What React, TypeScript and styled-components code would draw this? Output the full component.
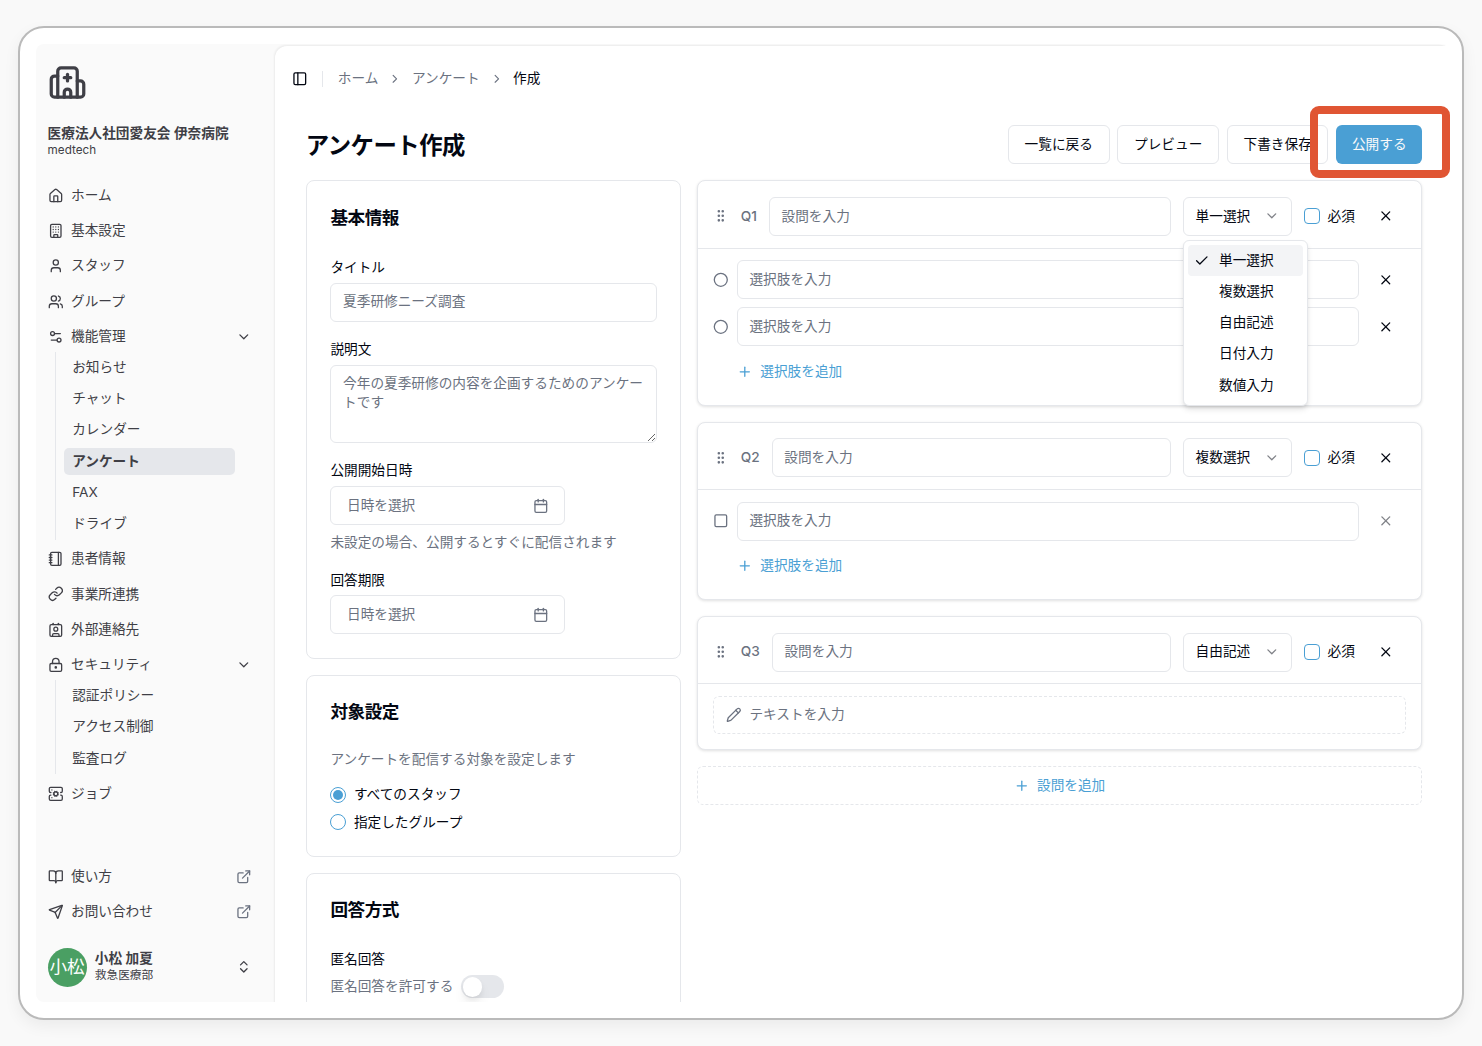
import React from 'react';
import styled, { createGlobalStyle, css } from 'styled-components';
import {
  BookOpen, Building, Calendar, Check, ChevronDown, ChevronRight, ChevronsUpDown, Circle, Contact,
  ExternalLink, GripVertical, Hospital, House, Link, LockKeyhole, Notebook, PanelLeft, Pencil, Plus,
  Send, ServerCog, Settings2, Square, User, Users, X,
} from 'lucide-react';

const c = {
  ink: '#030712',
  muted: '#6b7280',
  line: '#e5e7eb',
  side: '#3f3f46',
  accent: '#4a9fd4',
};
const ICON = 15.6;

const Global = createGlobalStyle`
  *, *::before, *::after { box-sizing: border-box; }
  body {
    margin: 0;
    background: #f9f9f9;
    color: ${c.ink};
    font-family: Inter, "Noto Sans CJK JP", sans-serif;
    font-size: 13.67px;
    line-height: 19.5px;
    -webkit-font-smoothing: antialiased;
  }
  h1, h2, p { margin: 0; }
  svg { display: block; flex: none; }
`;

const Page = styled.div`
  height: 1046px;
  padding: 26px 18px;
  overflow: hidden;
`;
const Frame = styled.div`
  width: 1446px;
  height: 994px;
  padding: 16px;
  border: 2px solid #bababa;
  border-radius: 26px;
  background: #fff;
  box-shadow: 0 6px 16px rgba(0, 0, 0, 0.06);
`;
const Shell = styled.div`
  display: flex;
  height: 958px;
  overflow-x: visible;
  overflow-y: clip;
  border-radius: 8px;
  background: #fafafa;
`;

/* ---------- sidebar ---------- */
const Sidebar = styled.aside`
  display: flex;
  flex-direction: column;
  flex: none;
  width: 239px;
  padding: 18.5px 24px 13px 11.6px;
  color: ${c.side};
`;
const OrgName = styled.div`
  margin: 22.5px 0 1px;
  font-weight: 600;
  line-height: 18px;
  white-space: nowrap;
`;
const OrgSub = styled.div`
  font-size: 11.7px;
  line-height: 15.6px;
`;
const Menu = styled.nav<{ $top: number }>`
  display: flex;
  flex-direction: column;
  gap: 3.9px;
  margin-top: ${p => p.$top}px;
`;
const MenuItem = styled.div`
  display: flex;
  align-items: center;
  gap: 7.8px;
  height: 31.25px;
`;
const Grow = styled.span`
  flex: 1;
  white-space: nowrap;
`;
const SubMenu = styled.div`
  display: flex;
  flex-direction: column;
  gap: 3.9px;
  margin-left: 7px;
  padding: 2px 0 2px 8.6px;
  border-left: 1px solid ${c.line};
`;
const SubItem = styled.div<{ $active?: boolean }>`
  display: flex;
  align-items: center;
  width: 171px;
  height: 27.35px;
  padding: 0 8px;
  border-radius: 5px;
  ${p => p.$active && css`background: ${c.line}; font-weight: 600;`}
`;
const ToneIcon = styled.span<{ $muted?: boolean }>`
  margin-right: -0.5px;
  color: ${p => (p.$muted ? c.muted : c.side)};
`;
const UserRow = styled.div`
  display: flex;
  align-items: center;
  margin-top: 19.7px;
  height: 39px;
`;
const Avatar = styled.div`
  display: grid;
  place-items: center;
  width: 39px;
  height: 39px;
  margin-right: 8.2px;
  border-radius: 50%;
  background: #4a9f63;
  color: #fff;
  font-size: 17.6px;
`;
const UserName = styled.div`
  font-weight: 600;
  line-height: 17.6px;
`;

/* ---------- main panel ---------- */
const Main = styled.main`
  flex: 1;
  height: 960px;
  margin-top: 2.4px;
  padding: 16.4px 24px 0 17px;
  border-radius: 12px 0 0 0;
  background: #fff;
  box-shadow: -1px -1px 2px rgba(0, 0, 0, 0.06);
`;
const Crumbs = styled.div`
  display: flex;
  align-items: center;
  gap: 9.9px;
  height: 32px;
  color: ${c.muted};
  white-space: nowrap;
`;
const Toggle = styled.span`
  margin-right: 4.4px;
  color: ${c.ink};
`;
const Divider = styled.span`
  width: 1px;
  height: 15.6px;
  margin-right: 5.1px;
  background: ${c.line};
`;
const Current = styled.span`
  color: ${c.ink};
`;
const TitleRow = styled.div`
  display: flex;
  align-items: center;
  justify-content: space-between;
  height: 39px;
  margin: 30.4px 0 16.2px 13.7px;
`;
const Title = styled.h1`
  padding-top: 2px;
  font-size: 23.4px;
  font-weight: 700;
  line-height: 32px;
  letter-spacing: -0.022em;
`;
const Actions = styled.div`
  display: flex;
  gap: 7.8px;
`;
const Button = styled.button<{ $primary?: boolean }>`
  height: 39px;
  padding: 0 15.7px;
  border: 1px solid ${c.line};
  border-radius: 6px;
  background: #fff;
  color: ${c.ink};
  font: inherit;
  white-space: nowrap;
  ${p => p.$primary && css`border: 0; background: ${c.accent}; color: #fafafa;`}
`;
const PublishSpot = styled.div`
  position: relative;
`;
const Highlight = styled.div`
  position: absolute;
  top: -19px;
  left: -26.5px;
  width: 140px;
  height: 72px;
  border: 8px solid #e05533;
  border-radius: 9px;
  pointer-events: none;
`;
const Columns = styled.div`
  display: grid;
  grid-template-columns: 375px 725.7px;
  gap: 15.6px;
  align-items: start;
  margin-left: 14px;
`;
const Stack = styled.div`
  display: flex;
  flex-direction: column;
  gap: 16.1px;
`;

/* ---------- settings cards ---------- */
const Card = styled.section`
  padding: 23.4px;
  border: 1px solid ${c.line};
  border-radius: 8px;
  background: #fff;
`;
const CardTitle = styled.h2<{ $gap: number }>`
  margin-bottom: ${p => p.$gap}px;
  font-size: 17.58px;
  font-weight: 600;
  line-height: 26px;
  letter-spacing: -0.025em;
`;
const Fields = styled.div`
  display: grid;
  gap: 21.5px;
`;
const Field = styled.div`
  display: grid;
  gap: 7.9px;
`;
const Label = styled.div`
  line-height: 13.7px;
`;
const Input = styled.div`
  display: flex;
  flex: 1;
  align-items: center;
  height: 39px;
  padding: 0 11.7px;
  border: 1px solid ${c.line};
  border-radius: 6px;
  background: #fff;
  color: ${c.muted};
  white-space: nowrap;
`;
const Area = styled.div`
  position: relative;
  height: 78px;
  padding: 7.8px 10px 7.8px 11.7px;
  border: 1px solid ${c.line};
  border-radius: 6px;
  color: ${c.muted};
`;
const Grip = styled.svg`
  position: absolute;
  right: 0;
  bottom: 0;
`;
const DateInput = styled(Input)`
  justify-content: space-between;
  width: 234.5px;
  padding: 0 15.8px 0 15.6px;
`;
const Note = styled.p`
  color: ${c.muted};
  white-space: nowrap;
`;
const Radios = styled.div`
  display: grid;
  gap: 7.8px;
  margin-top: 16px;
`;
const RadioRow = styled.div`
  display: flex;
  align-items: center;
  gap: 7.5px;
`;
const Radio = styled.span<{ $on?: boolean }>`
  display: grid;
  place-items: center;
  width: 16px;
  height: 16px;
  border: 1px solid ${c.accent};
  border-radius: 50%;
  &::after {
    content: '';
    width: 10px;
    height: 10px;
    border-radius: 50%;
    background: ${p => (p.$on ? c.accent : 'transparent')};
  }
`;
const Switch = styled.span`
  width: 43px;
  height: 23.4px;
  padding: 2px;
  border-radius: 12px;
  background: ${c.line};
  &::after {
    content: '';
    display: block;
    width: 19.5px;
    height: 19.5px;
    border-radius: 50%;
    background: #fff;
    box-shadow: 0 8px 12px rgba(0, 0, 0, 0.06), 0 3px 5px rgba(0, 0, 0, 0.05);
  }
`;

/* ---------- question cards ---------- */
const Question = styled.section`
  border: 1px solid ${c.line};
  border-radius: 8px;
  background: #fff;
  box-shadow: 0 1px 3px rgba(0, 0, 0, 0.12);
`;
const QHead = styled.div`
  display: flex;
  align-items: center;
  height: 67.2px;
  padding: 3.6px 0 0 15.6px;
  border-bottom: 1px solid ${c.line};
`;
const QName = styled.span`
  margin: 0 11.9px 0 12px;
  color: ${c.muted};
  font-weight: 500;
`;
const Muted = styled.span`
  color: ${c.muted};
`;
const SelectWrap = styled.div`
  position: relative;
  margin: 0 11.7px;
`;
const Select = styled(Input)`
  justify-content: space-between;
  width: 109.5px;
  color: ${c.ink};
`;
const SelectArrow = styled.span`
  opacity: 0.5;
`;
const Box = styled.span`
  width: 16px;
  height: 16px;
  margin-right: 7.5px;
  border: 1px solid ${c.accent};
  border-radius: 4px;
`;
const Remove = styled.span<{ $disabled?: boolean }>`
  display: grid;
  place-items: center;
  width: 55px;
  margin: 0 7.8px 0 3.6px;
  opacity: ${p => (p.$disabled ? 0.5 : 1)};
`;
const QBody = styled.div`
  display: grid;
  gap: 7.9px;
  padding: 11.7px 0 15.6px 15.6px;
`;
const Option = styled.div`
  display: flex;
  align-items: center;
  gap: 8px;
  ${Remove} { margin-left: -8.2px; }
`;
const AddOption = styled.div`
  display: flex;
  align-items: center;
  gap: 7.8px;
  height: 35px;
  padding-left: 23.7px;
  color: ${c.accent};
`;
const TextPreview = styled.div`
  display: flex;
  align-items: center;
  gap: 7.8px;
  height: 37.5px;
  margin-right: 15.6px;
  padding: 0 11.9px;
  border: 1px dashed ${c.line};
  border-radius: 6px;
  color: ${c.muted};
`;
const AddQuestion = styled.div`
  display: flex;
  align-items: center;
  justify-content: center;
  gap: 7.8px;
  height: 39px;
  border: 1px dashed ${c.line};
  border-radius: 6px;
  color: ${c.accent};
`;
const Popup = styled.div`
  position: absolute;
  z-index: 2;
  top: 43px;
  left: 0;
  width: 125px;
  height: 166px;
  padding: 4px;
  border: 1px solid ${c.line};
  border-radius: 6px;
  background: #fff;
  box-shadow: 0 4px 6px -1px rgba(0, 0, 0, 0.12), 0 2px 4px -2px rgba(0, 0, 0, 0.12);
`;
const PopupItem = styled.div<{ $on?: boolean }>`
  display: grid;
  grid-template-columns: 24.8px 1fr;
  align-items: center;
  height: 31.25px;
  padding-left: 6.3px;
  border-radius: 4px;
  background: ${p => (p.$on ? '#f3f4f6' : 'transparent')};
`;

const types = ['単一選択', '複数選択', '自由記述', '日付入力', '数値入力'];

function OptionRow({ icon, disabled }: { icon: React.ReactNode; disabled?: boolean }) {
  return (
    <Option>
      <Muted>{icon}</Muted>
      <Input>選択肢を入力</Input>
      <Remove $disabled={disabled}><X size={ICON} /></Remove>
    </Option>
  );
}

function QuestionHead({ name, type, open }: { name: string; type: string; open?: boolean }) {
  return (
    <QHead>
      <Muted><GripVertical size={ICON} /></Muted>
      <QName>{name}</QName>
      <Input>設問を入力</Input>
      <SelectWrap>
        <Select>
          {type}
          <SelectArrow><ChevronDown size={ICON} /></SelectArrow>
        </Select>
        {open && (
          <Popup>
            {types.map(t => (
              <PopupItem key={t} $on={t === type}>
                <span>{t === type && <Check size={ICON} />}</span>
                {t}
              </PopupItem>
            ))}
          </Popup>
        )}
      </SelectWrap>
      <Box />
      必須
      <Remove><X size={ICON} /></Remove>
    </QHead>
  );
}

function DateField({ label, note }: { label: string; note?: string }) {
  return (
    <Field>
      <Label>{label}</Label>
      <DateInput>日時を選択<Calendar size={ICON} /></DateInput>
      {note && <Note>{note}</Note>}
    </Field>
  );
}

function Group({ icon, label, items, active }: { icon: React.ReactNode; label: string; items: string[]; active?: string }) {
  return (
    <div>
      <MenuItem>{icon}<Grow>{label}</Grow><ToneIcon><ChevronDown size={ICON} /></ToneIcon></MenuItem>
      <SubMenu>
        {items.map(i => <SubItem key={i} $active={i === active}>{i}</SubItem>)}
      </SubMenu>
    </div>
  );
}

export default function App() {
  return (
    <>
      <Global />
      <Page>
        <Frame>
          <Shell>
            <Sidebar>
              <Hospital size={39} />
              <OrgName>医療法人社団愛友会 伊奈病院</OrgName>
              <OrgSub>medtech</OrgSub>
              <Menu $top={21.7}>
                <MenuItem><House size={ICON} />ホーム</MenuItem>
                <MenuItem><Building size={ICON} />基本設定</MenuItem>
                <MenuItem><User size={ICON} />スタッフ</MenuItem>
                <MenuItem><Users size={ICON} />グループ</MenuItem>
                <Group
                  icon={<Settings2 size={ICON} />}
                  label="機能管理"
                  items={['お知らせ', 'チャット', 'カレンダー', 'アンケート', 'FAX', 'ドライブ']}
                  active="アンケート"
                />
                <MenuItem><Notebook size={ICON} />患者情報</MenuItem>
                <MenuItem><Link size={ICON} />事業所連携</MenuItem>
                <MenuItem><Contact size={ICON} />外部連絡先</MenuItem>
                <Group
                  icon={<LockKeyhole size={ICON} />}
                  label="セキュリティ"
                  items={['認証ポリシー', 'アクセス制御', '監査ログ']}
                />
                <MenuItem><ServerCog size={ICON} />ジョブ</MenuItem>
              </Menu>
              <Menu $top={52.3}>
                <MenuItem><BookOpen size={ICON} /><Grow>使い方</Grow><ToneIcon $muted><ExternalLink size={ICON} /></ToneIcon></MenuItem>
                <MenuItem><Send size={ICON} /><Grow>お問い合わせ</Grow><ToneIcon $muted><ExternalLink size={ICON} /></ToneIcon></MenuItem>
              </Menu>
              <UserRow>
                <Avatar>小松</Avatar>
                <Grow>
                  <UserName>小松 加夏</UserName>
                  <OrgSub>救急医療部</OrgSub>
                </Grow>
                <ToneIcon><ChevronsUpDown size={ICON} /></ToneIcon>
              </UserRow>
            </Sidebar>
            <Main>
              <Crumbs>
                <Toggle><PanelLeft size={ICON} /></Toggle>
                <Divider />
                <span>ホーム</span>
                <ChevronRight size={13.7} />
                <span>アンケート</span>
                <ChevronRight size={13.7} />
                <Current>作成</Current>
              </Crumbs>
              <TitleRow>
                <Title>アンケート作成</Title>
                <Actions>
                  <Button>一覧に戻る</Button>
                  <Button>プレビュー</Button>
                  <Button>下書き保存</Button>
                  <PublishSpot>
                    <Button $primary>公開する</Button>
                    <Highlight />
                  </PublishSpot>
                </Actions>
              </TitleRow>
              <Columns>
                <Stack>
                  <Card>
                    <CardTitle $gap={30.4}>基本情報</CardTitle>
                    <Fields>
                      <Field>
                        <Label>タイトル</Label>
                        <Input>夏季研修ニーズ調査</Input>
                      </Field>
                      <Field>
                        <Label>説明文</Label>
                        <Area>
                          今年の夏季研修の内容を企画するためのアンケートです
                          <Grip width="9" height="9" viewBox="0 0 9 9" fill="none" stroke="#555" strokeWidth="0.9">
                            <path d="M1 8 8 1M5 8l3-3" />
                          </Grip>
                        </Area>
                      </Field>
                      <DateField label="公開開始日時" note="未設定の場合、公開するとすぐに配信されます" />
                      <DateField label="回答期限" />
                    </Fields>
                  </Card>
                  <Card>
                    <CardTitle $gap={24.6}>対象設定</CardTitle>
                    <Note>アンケートを配信する対象を設定します</Note>
                    <Radios>
                      <RadioRow><Radio $on />すべてのスタッフ</RadioRow>
                      <RadioRow><Radio />指定したグループ</RadioRow>
                    </Radios>
                  </Card>
                  <Card>
                    <CardTitle $gap={30.4}>回答方式</CardTitle>
                    <Field>
                      <Label>匿名回答</Label>
                      <RadioRow><Note>匿名回答を許可する</Note><Switch /></RadioRow>
                    </Field>
                  </Card>
                </Stack>
                <Stack>
                  <Question>
                    <QuestionHead name="Q1" type="単一選択" open />
                    <QBody>
                      <OptionRow icon={<Circle size={ICON} />} />
                      <OptionRow icon={<Circle size={ICON} />} />
                      <AddOption><Plus size={ICON} />選択肢を追加</AddOption>
                    </QBody>
                  </Question>
                  <Question>
                    <QuestionHead name="Q2" type="複数選択" />
                    <QBody>
                      <OptionRow icon={<Square size={ICON} />} disabled />
                      <AddOption><Plus size={ICON} />選択肢を追加</AddOption>
                    </QBody>
                  </Question>
                  <Question>
                    <QuestionHead name="Q3" type="自由記述" />
                    <QBody>
                      <TextPreview><Pencil size={ICON} />テキストを入力</TextPreview>
                    </QBody>
                  </Question>
                  <AddQuestion><Plus size={ICON} />設問を追加</AddQuestion>
                </Stack>
              </Columns>
            </Main>
          </Shell>
        </Frame>
      </Page>
    </>
  );
}
